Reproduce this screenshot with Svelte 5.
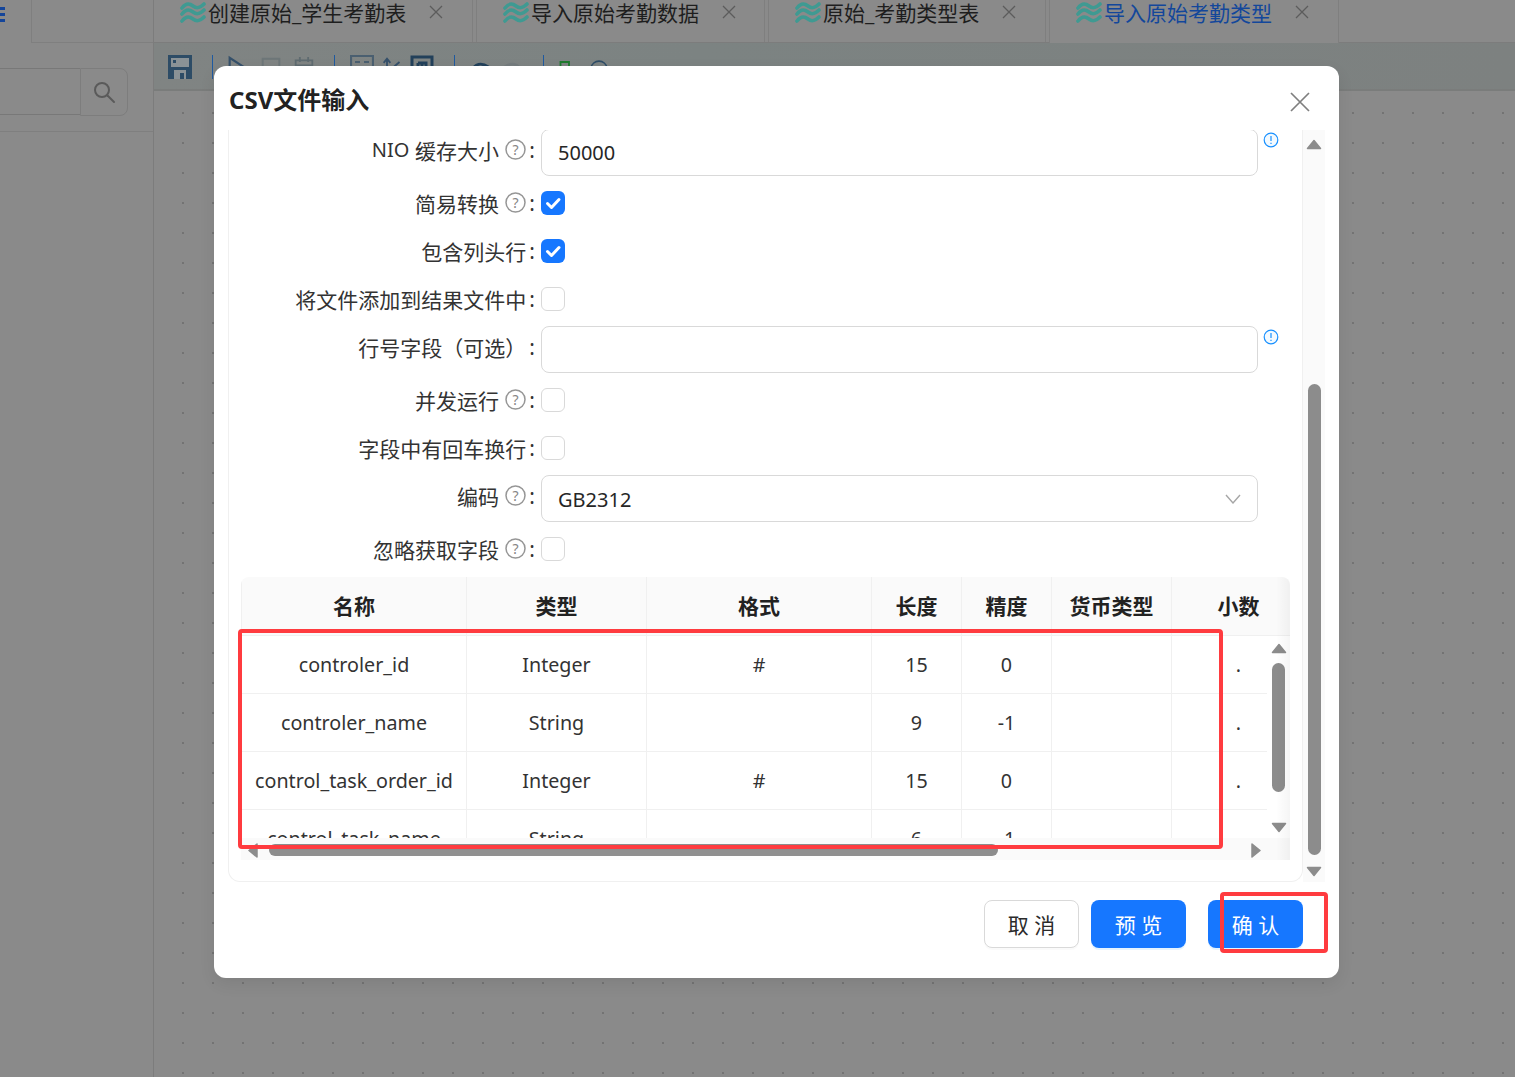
<script lang="ts">
	const tabs = [
		{ title: '创建原始_学生考勤表', active: false },
		{ title: '导入原始考勤数据', active: false },
		{ title: '原始_考勤类型表', active: false },
		{ title: '导入原始考勤类型', active: true }
	];

	const columns = ['名称', '类型', '格式', '长度', '精度', '货币类型', '小数'];

	const rows = [
		['controler_id', 'Integer', '#', '15', '0', '', '.'],
		['controler_name', 'String', '', '9', '-1', '', '.'],
		['control_task_order_id', 'Integer', '#', '15', '0', '', '.'],
		['control_task_name', 'String', '', '6', '-1', '', '.']
	];
</script>

{#snippet wave()}
	<svg class="wave" viewBox="0 0 26 22" width="26" height="22" fill="none" stroke="#3f9a92" stroke-width="3.6" stroke-linecap="round">
		<path d="M2 6 C6 1 9 1 13 4 C17 7 20 6 24 2" />
		<path d="M2 12 C6 7 9 7 13 10 C17 13 20 12 24 8" />
		<path d="M2 19 C6 14 9 14 13 17 C17 20 20 19 24 15" />
	</svg>
{/snippet}

{#snippet help()}
	<svg class="help" viewBox="0 0 21 21" width="21" height="21">
		<circle cx="10.5" cy="10.5" r="9.5" fill="none" stroke="#969696" stroke-width="1.5" />
		<text x="10.5" y="15.5" text-anchor="middle" font-size="14" fill="#858585">?</text>
	</svg>
{/snippet}

{#snippet info()}
	<svg class="info" viewBox="0 0 16 16" width="16" height="16">
		<circle cx="8" cy="8" r="6.8" fill="#f3faff" stroke="#1890ff" stroke-width="1.2" />
		<path d="M8 4v5M8 10.8v1.2" stroke="#1890ff" stroke-width="1.2" />
	</svg>
{/snippet}

{#snippet check(on: boolean)}
	<span class="check" class:on>
		{#if on}
			<svg viewBox="0 0 24 24" width="24" height="24" fill="none" stroke="#fff" stroke-width="3" stroke-linecap="round" stroke-linejoin="round">
				<path d="M6.5 12.5 L10.5 16.5 L18 8.5" />
			</svg>
		{/if}
	</span>
{/snippet}

{#snippet arrow(dir: string)}
	<svg class="arrow {dir}" viewBox="0 0 16 11" width="16" height="11">
		<path d="M8 1.5 L14.5 9.5 H1.5 Z" fill="#8c8c8c" stroke="#8c8c8c" stroke-width="1.5" stroke-linejoin="round" />
	</svg>
{/snippet}

<div class="page">
	<aside class="side">
		<div class="side-head">
			<div class="burger"><i></i><i></i><i></i></div>
			<div class="side-cell"></div>
		</div>
		<div class="search">
			<div class="search-input"></div>
			<div class="search-btn">
				<svg viewBox="0 0 24 24" width="24" height="24" fill="none" stroke="#5a5a5a" stroke-width="2" stroke-linecap="round">
					<circle cx="10" cy="10" r="7" />
					<path d="M15.5 15.5 L22 22" />
				</svg>
			</div>
		</div>
	</aside>

	<main class="main">
		<div class="tabs">
			{#each tabs as tab}
				<div class="tab" class:active={tab.active}>
					{@render wave()}
					<span class="tab-title">{tab.title}</span>
					<svg class="tab-close" viewBox="0 0 14 14" width="14" height="14" stroke="#5c5c5c" stroke-width="1.3">
						<path d="M1 1 L13 13 M13 1 L1 13" />
					</svg>
				</div>
			{/each}
		</div>

		<div class="toolbar">
			<svg class="tool" viewBox="0 0 24 24" width="24" height="24">
				<path d="M0 0h24v24H0z" fill="#2d4c66" />
				<path d="M3 3h18v9H3z" fill="#8a9296" />
				<path d="M6 15h12v9H6z" fill="#8a9296" />
				<path d="M12 18h4v6h-4z" fill="#2d4c66" />
				<path d="M5 5h3v3H5z" fill="#2d4c66" />
			</svg>
			<i class="sep"></i>
			<div class="group g1">
				<svg class="tool" viewBox="0 0 24 24" width="20" height="24" fill="none" stroke="#35506a" stroke-width="2.6">
					<path d="M2 1 V24 L22 14 Z" />
				</svg>
				<svg class="tool" viewBox="0 0 24 24" width="20" height="24" fill="none" stroke="#6d7678" stroke-width="2.4">
					<path d="M2 2h20v20H2z" />
				</svg>
				<svg class="tool" viewBox="0 0 24 24" width="20" height="24" fill="none" stroke="#5f6b70" stroke-width="2.2">
					<path d="M2 4h20v20H2z M7 0v6 M17 0v6 M2 10h20" />
				</svg>
			</div>
			<i class="sep"></i>
			<div class="group g2">
				<svg class="tool" viewBox="0 0 24 24" width="24" height="24" fill="none" stroke="#4a5f70" stroke-width="2.2">
					<path d="M1 1h22v14H1z M5 7h5 M14 7h5" />
				</svg>
				<svg class="tool" viewBox="0 0 24 24" width="20" height="24" fill="none" stroke="#35506a" stroke-width="2.2">
					<path d="M6 24V3 M2 7l4-5 4 5 M16 24V12 M14 12l7-6" />
				</svg>
				<svg class="tool" viewBox="0 0 24 24" width="24" height="24" fill="none" stroke="#22405a" stroke-width="3">
					<path d="M2 2h20v20H2z M8 8h8v8 M8 8v8 M12 8v6" />
				</svg>
			</div>
			<i class="sep"></i>
			<div class="group g3">
				<svg class="tool" viewBox="0 0 24 24" width="20" height="24" fill="none" stroke="#22405a" stroke-width="3.4">
					<path d="M3 16 C5 8 14 6 22 12" />
				</svg>
				<svg class="tool" viewBox="0 0 24 24" width="20" height="24" fill="none" stroke="#747b7d" stroke-width="3.4">
					<path d="M21 16 C19 8 10 6 2 12" />
				</svg>
			</div>
			<i class="sep"></i>
			<div class="group g4">
				<svg class="tool" viewBox="0 0 24 24" width="12" height="24" fill="none" stroke="#1f7a2e" stroke-width="3.6">
					<path d="M3 14 V2 H20 V10" />
				</svg>
				<svg class="tool" viewBox="0 0 24 24" width="20" height="24" fill="none" stroke="#2d4c66" stroke-width="2">
					<path d="M2 14 C4 2 20 2 22 14" />
				</svg>
			</div>
		</div>

		<div class="canvas"></div>
	</main>
</div>

<div class="modal">
	<header class="modal-head">
		<h2>CSV文件输入</h2>
		<svg class="modal-close" viewBox="0 0 20 20" width="20" height="20" stroke="#7f7f7f" stroke-width="1.7">
			<path d="M1 1 L19 19 M19 1 L1 19" />
		</svg>
	</header>

	<div class="body">
		<div class="card">
			<div class="form">
				<div class="row tall">
					<div class="label"><span class="latin">NIO</span> 缓存大小 {@render help()}<span class="colon">:</span></div>
					<div class="input">50000</div>
					{@render info()}
				</div>
				<div class="row">
					<div class="label">简易转换 {@render help()}<span class="colon">:</span></div>
					{@render check(true)}
				</div>
				<div class="row">
					<div class="label">包含列头行<span class="colon">:</span></div>
					{@render check(true)}
				</div>
				<div class="row">
					<div class="label">将文件添加到结果文件中<span class="colon">:</span></div>
					{@render check(false)}
				</div>
				<div class="row tall">
					<div class="label">行号字段（可选）<span class="colon">:</span></div>
					<div class="input"></div>
					{@render info()}
				</div>
				<div class="row">
					<div class="label">并发运行 {@render help()}<span class="colon">:</span></div>
					{@render check(false)}
				</div>
				<div class="row">
					<div class="label">字段中有回车换行<span class="colon">:</span></div>
					{@render check(false)}
				</div>
				<div class="row tall">
					<div class="label">编码 {@render help()}<span class="colon">:</span></div>
					<div class="input select">
						GB2312
						<svg viewBox="0 0 16 10" width="16" height="10" fill="none" stroke="#a6a6a6" stroke-width="1.4">
							<path d="M1 1 L8 9 L15 1" />
						</svg>
					</div>
				</div>
				<div class="row">
					<div class="label">忽略获取字段 {@render help()}<span class="colon">:</span></div>
					{@render check(false)}
				</div>
			</div>

			<div class="table">
				<div class="tr th">
					{#each columns as col}
						<div class="cell">{col}</div>
					{/each}
				</div>
				<div class="tbody">
					{#each rows as row}
						<div class="tr">
							{#each row as value}
								<div class="cell">{value}</div>
							{/each}
						</div>
					{/each}
				</div>
				<div class="vbar">
					{@render arrow('up')}
					<div class="vthumb"></div>
					{@render arrow('down')}
				</div>
				<div class="hbar">
					{@render arrow('left')}
					<div class="hthumb"></div>
					{@render arrow('right')}
				</div>
				<div class="edge"></div>
			</div>
		</div>

		<div class="scroll">
			{@render arrow('up')}
			<div class="scroll-thumb"></div>
			{@render arrow('down')}
		</div>
	</div>

	<footer class="foot">
		<button class="btn">取 消</button>
		<button class="btn primary">预 览</button>
		<button class="btn primary ok">确 认</button>
	</footer>
</div>

<div class="mark mark-table"></div>
<div class="mark mark-ok"></div>

<style>
	:global(body) {
		margin: 0;
		background: #8a8a8a;
		font-family: 'Noto Sans', 'Noto Sans CJK SC', sans-serif;
	}

	.page {
		display: flex;
		width: 1515px;
		height: 1077px;
		overflow: hidden;
		background: #8a8a8a;
	}

	.side {
		flex: none;
		width: 153px;
		height: 132px;
		box-sizing: border-box;
		border-bottom: 1px solid #7f7f7f;
	}
	.side-head {
		display: flex;
		height: 43px;
		justify-content: space-between;
	}
	.burger {
		display: flex;
		flex-direction: column;
		gap: 3px;
		width: 5px;
		padding-top: 7px;
	}
	.burger i {
		height: 3px;
		background: #14459a;
	}
	.side-cell {
		width: 122px;
		box-sizing: border-box;
		border-left: 1px solid #7f7f7f;
		border-bottom: 1px solid #7f7f7f;
	}
	.search {
		display: flex;
		margin-top: 25px;
		height: 48px;
		width: 128px;
	}
	.search-input {
		flex: 1;
		box-sizing: border-box;
		height: 47px;
		border-top: 1px solid #787878;
		border-bottom: 1px solid #787878;
	}
	.search-btn {
		display: flex;
		align-items: center;
		justify-content: center;
		width: 48px;
		box-sizing: border-box;
		border: 1px solid #7d7d7d;
		border-radius: 0 8px 8px 0;
	}

	.main {
		flex: 1;
		display: flex;
		flex-direction: column;
		min-width: 0;
		border-left: 1px solid #7c7c7c;
	}
	.tabs {
		display: flex;
		gap: 3px;
		height: 43px;
		box-sizing: border-box;
		border-bottom: 1px solid #7c7c7c;
	}
	.tab {
		display: flex;
		align-items: flex-start;
		box-sizing: content-box;
		height: 42px;
		padding-left: 26px;
		border-right: 1px solid #7f7f7f;
	}
	.tab:nth-child(1) {
		width: 292px;
	}
	.tab:nth-child(2) {
		width: 261px;
		border-left: 1px solid #7f7f7f;
	}
	.tab:nth-child(3) {
		width: 250px;
		border-left: 1px solid #7f7f7f;
	}
	.tab.active {
		width: 262px;
		height: 43px;
		background: #8a8a8a;
		border-left: 1px solid #7f7f7f;
		position: relative;
	}
	.wave {
		flex: none;
		margin-top: 2px;
	}
	.tab-title {
		margin-left: 2px;
		font-size: 21px;
		line-height: 26px;
		color: #1e1e1e;
		white-space: nowrap;
	}
	.tab.active .tab-title {
		color: #13479b;
	}
	.tab-close {
		margin: 5px 0 0 23px;
	}
	.toolbar {
		display: flex;
		align-items: flex-start;
		height: 48px;
		box-sizing: border-box;
		padding: 12px 0 0 14px;
		background: linear-gradient(90deg, #808483, #7c8382 40%, #7d8180);
		border-bottom: 2px solid #7a7c7b;
	}
	.tool {
		flex: none;
	}
	.group {
		display: flex;
		flex: none;
	}
	.g1 {
		gap: 13px;
	}
	.g2 {
		gap: 8px;
	}
	.g3 {
		gap: 13px;
	}
	.g4 {
		gap: 18px;
	}
	.sep {
		flex: none;
		width: 1px;
		height: 24px;
		margin: 0 15px 0 20px;
		background: #1f5aa0;
	}
	.canvas {
		flex: 1;
		background-color: #8a8a8a;
		background-image: radial-gradient(circle at center, #737373 0 0.7px, transparent 1px);
		background-size: 30px 30px;
		background-position: 14px 7px;
	}

	.modal {
		position: absolute;
		left: 214px;
		top: 66px;
		width: 1125px;
		height: 912px;
		display: flex;
		flex-direction: column;
		box-sizing: border-box;
		background: #fff;
		border-radius: 12px;
		box-shadow: 0 6px 16px rgba(0, 0, 0, 0.08);
		color: #2b2b2b;
	}
	.modal-head {
		flex: none;
		display: flex;
		align-items: center;
		justify-content: space-between;
		height: 64px;
		padding: 0 29px 0 15px;
		box-sizing: border-box;
	}
	.modal-head h2 {
		margin: 1px 0 0;
		font-size: 24px;
		font-weight: 700;
		color: #222;
	}
	.modal-close {
		margin-top: 7px;
	}
	.body {
		flex: none;
		display: flex;
		height: 752px;
		margin-left: 14px;
		width: 1097px;
	}
	.card {
		flex: none;
		width: 1075px;
		box-sizing: border-box;
		padding-left: 12px;
		overflow: hidden;
		border-left: 1px solid #f0f0f0;
		border-right: 1px solid #f0f0f0;
		border-bottom: 1px solid #f0f0f0;
		border-radius: 0 0 12px 12px;
	}
	.form {
		margin-top: -1px;
		font-size: 21px;
	}
	.row {
		display: flex;
		align-items: center;
		height: 48px;
	}
	.row.tall {
		height: 47px;
		margin: 3px 0;
	}
	.row.tall:first-child {
		margin-top: 0;
	}
	.label {
		flex: none;
		display: flex;
		align-items: center;
		justify-content: flex-end;
		box-sizing: border-box;
		width: 300px;
		margin-top: -1px;
		white-space: pre;
		color: #333;
	}
	.tall .label {
		margin-top: -6px;
	}
	.latin {
		font-size: 20px;
	}
	.help {
		flex: none;
		margin-left: 1px;
	}
	.colon {
		margin: 0 6px 0 3px;
	}
	.input {
		flex: none;
		box-sizing: border-box;
		width: 717px;
		height: 47px;
		padding-left: 16px;
		line-height: 45px;
		border: 1px solid #d9d9d9;
		border-radius: 8px;
		font-size: 20px;
		color: #262626;
	}
	.select {
		display: flex;
		align-items: center;
		justify-content: space-between;
		padding: 1px 16px 0;
	}
	.info {
		align-self: flex-start;
		margin: 3px 0 0 5px;
	}
	.check {
		flex: none;
		box-sizing: border-box;
		width: 24px;
		height: 24px;
		border: 1px solid #d9d9d9;
		border-radius: 6px;
		background: #fff;
	}
	.check.on {
		border: none;
		background: #1677ff;
	}
	.check svg {
		display: block;
	}

	.table {
		position: relative;
		width: 1049px;
		height: 283px;
		margin-top: 4px;
		overflow: hidden;
		border-radius: 8px 8px 0 0;
		font-size: 19.7px;
		color: #333;
	}
	.tr {
		display: grid;
		grid-template-columns: 226px 180px 225px 90px 90px 120px 134px;
		width: 1065px;
		height: 58px;
		box-sizing: border-box;
		border-bottom: 1px solid #f0f0f0;
	}
	.th {
		height: 59px;
		background: #fafafa;
		font-size: 21px;
		font-weight: 700;
		color: #222;
	}
	.th .cell {
		padding-bottom: 2px;
	}
	.tbody {
		height: 202px;
		overflow: hidden;
	}
	.cell {
		display: flex;
		align-items: center;
		justify-content: center;
		box-sizing: border-box;
		border-right: 1px solid #f0f0f0;
		white-space: nowrap;
	}
	.tr .cell:first-child {
		border-left: 1px solid #f0f0f0;
	}
	.vbar {
		position: absolute;
		right: 0;
		top: 59px;
		bottom: 22px;
		width: 23px;
		display: flex;
		flex-direction: column;
		align-items: center;
		background: #fff;
	}
	.vthumb {
		flex: none;
		width: 13px;
		height: 129px;
		margin-top: 9px;
		border-radius: 7px;
		background: #8c8c8c;
	}
	.arrow {
		flex: none;
	}
	.arrow.up {
		margin-top: 7px;
	}
	.arrow.down {
		transform: rotate(180deg);
		margin-top: 30px;
	}
	.hbar {
		position: absolute;
		left: 0;
		right: 0;
		bottom: 0;
		height: 22px;
		display: flex;
		align-items: center;
		background: #fafafa;
	}
	.hbar .arrow.left {
		margin: 2px 0 0 4px;
		transform: rotate(-90deg);
	}
	.hthumb {
		flex: none;
		width: 729px;
		height: 12px;
		margin: 2px 0 0 8px;
		border-radius: 6px;
		background: #8c8c8c;
	}
	.hbar .arrow.right {
		margin: 2px 0 0 250px;
		transform: rotate(90deg);
	}
	.edge {
		position: absolute;
		top: 0;
		right: 0;
		bottom: 0;
		width: 14px;
		background: linear-gradient(90deg, transparent, rgba(0, 0, 0, 0.04));
	}

	.scroll {
		flex: none;
		width: 22px;
		display: flex;
		flex-direction: column;
		align-items: center;
		background: #fafafa;
	}
	.scroll .arrow.up {
		margin-top: 9px;
	}
	.scroll-thumb {
		flex: none;
		width: 13px;
		height: 471px;
		margin-top: 234px;
		border-radius: 7px;
		background: #8c8c8c;
	}
	.scroll .arrow.down {
		margin-top: 11px;
	}

	.foot {
		flex: none;
		display: flex;
		justify-content: flex-end;
		gap: 12px;
		padding: 18px 36px 0 0;
	}
	.btn {
		width: 95px;
		height: 48px;
		padding: 0;
		border: 1px solid #d9d9d9;
		border-radius: 8px;
		background: #fff;
		font: inherit;
		font-size: 21px;
		font-family: 'Noto Sans', 'Noto Sans CJK SC', sans-serif;
		color: #2b2b2b;
		box-shadow: 0 2px 0 rgba(0, 0, 0, 0.02);
	}
	.btn.primary {
		border: none;
		background: #1677ff;
		color: #fff;
		box-shadow: 0 2px 0 rgba(5, 145, 255, 0.1);
	}
	.btn.ok {
		margin-left: 10px;
	}

	.mark {
		position: absolute;
		box-sizing: border-box;
		border: 4px solid #ff3b3f;
		border-radius: 4px;
		pointer-events: none;
	}
	.mark-table {
		left: 238px;
		top: 629px;
		width: 985px;
		height: 220px;
	}
	.mark-ok {
		left: 1220px;
		top: 892px;
		width: 108px;
		height: 61px;
	}
</style>
